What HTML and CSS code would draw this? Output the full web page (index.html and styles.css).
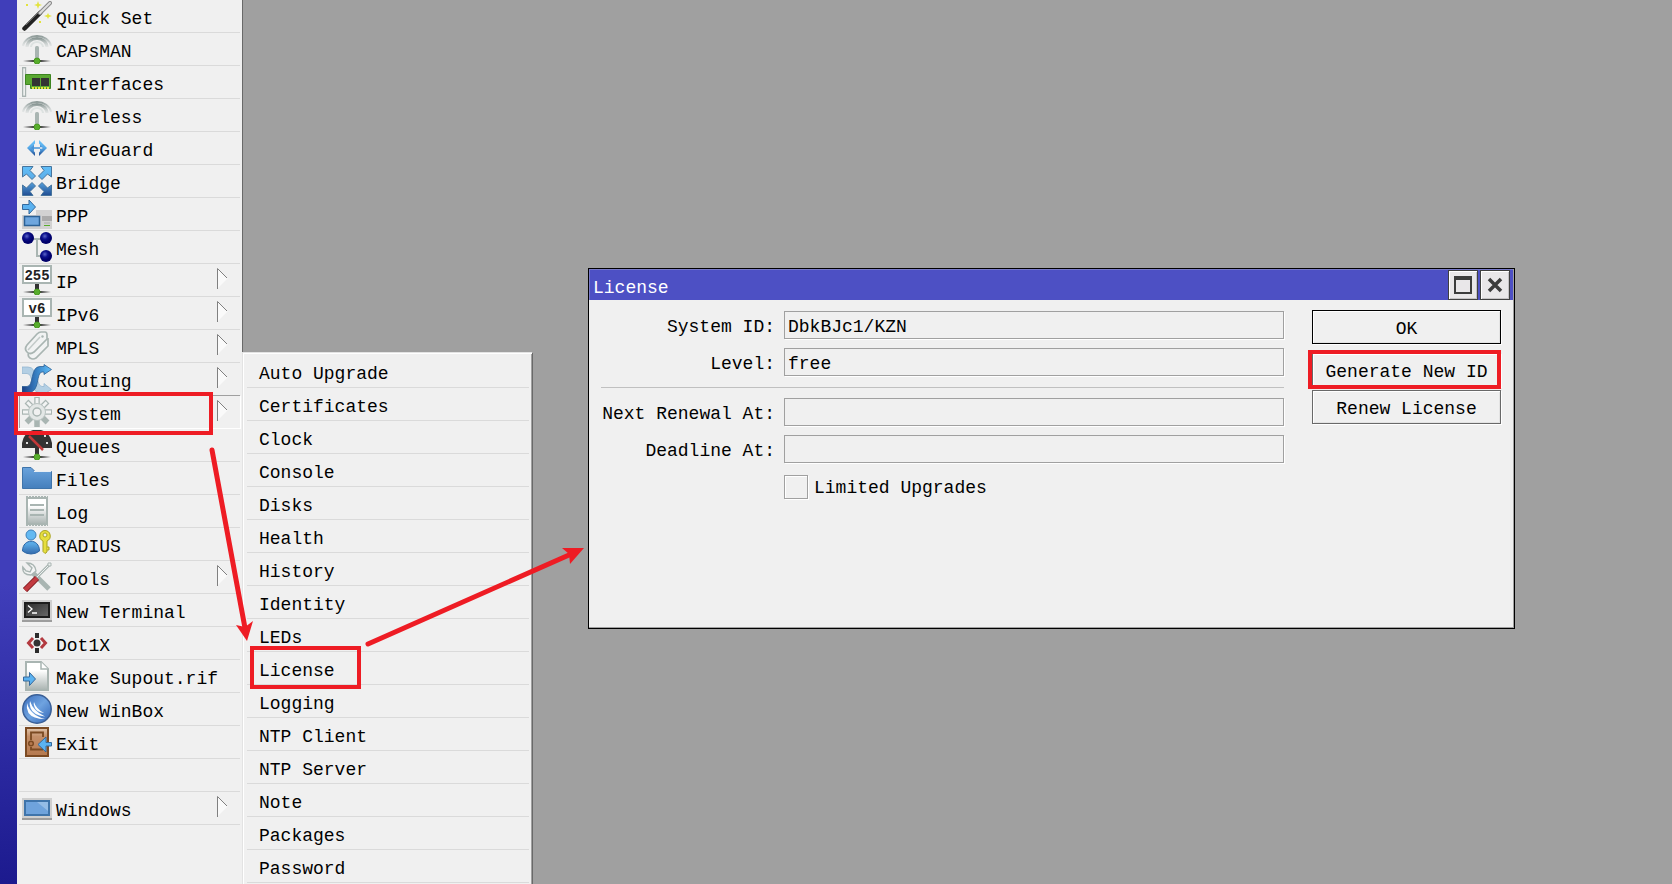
FILE: index.html
```html
<!DOCTYPE html>
<html lang="en">
<head>
<meta charset="utf-8">
<title>WinBox - License</title>
<link rel="stylesheet" href="styles.css">
</head>
<body>
<svg class="defs" aria-hidden="true">
  <defs>
    <linearGradient id="sky" x1="0" y1="0" x2="0" y2="30" gradientUnits="userSpaceOnUse"><stop offset="0" stop-color="#62c0fa"/><stop offset=".5" stop-color="#5aa9e4"/><stop offset="1" stop-color="#1f4a90"/></linearGradient>
    <linearGradient id="chevron" x1="0" y1="7" x2="0" y2="23" gradientUnits="userSpaceOnUse"><stop offset="0" stop-color="#6cc6fb"/><stop offset=".5" stop-color="#55a8e8"/><stop offset="1" stop-color="#1f4a90"/></linearGradient>
    <linearGradient id="route" x1="0" x2="1"><stop offset="0" stop-color="#1a3f84"/><stop offset=".6" stop-color="#3f8ed0"/><stop offset="1" stop-color="#62c0fa"/></linearGradient>
    <linearGradient id="base" x1="0" x2="1"><stop offset="0" stop-color="#333" stop-opacity="0"/><stop offset=".4" stop-color="#333"/><stop offset=".6" stop-color="#333"/><stop offset="1" stop-color="#333" stop-opacity="0"/></linearGradient>
    <linearGradient id="arc" x1="0" y1="0" x2="0" y2="1"><stop offset="0" stop-color="#8c9997"/><stop offset="1" stop-color="#c5cdcc" stop-opacity=".3"/></linearGradient>
    <linearGradient id="paper" x1="0" y1="0" x2="0" y2="1"><stop offset=".3" stop-color="#fff"/><stop offset="1" stop-color="#a9b3b1"/></linearGradient>
    <radialGradient id="ball" cx=".4" cy=".35"><stop offset="0" stop-color="#5c66c8"/><stop offset=".5" stop-color="#0c108c"/><stop offset="1" stop-color="#00006a"/></radialGradient>
    <linearGradient id="globe" x1="0" y1="0" x2="1" y2="1"><stop offset="0" stop-color="#3a6dbd"/><stop offset=".5" stop-color="#6fa3e0"/><stop offset="1" stop-color="#2f62b4"/></linearGradient>
    <linearGradient id="folder" x1="0" y1="0" x2="0" y2="1"><stop offset="0" stop-color="#6aa3dc"/><stop offset="1" stop-color="#457fbc"/></linearGradient>
    <linearGradient id="door" x1="0" y1="0" x2="0" y2="1"><stop offset="0" stop-color="#e0c4aa"/><stop offset=".3" stop-color="#c4906a"/><stop offset="1" stop-color="#b5794e"/></linearGradient>
    <linearGradient id="term" x1="0" y1="0" x2="1" y2="1"><stop offset="0" stop-color="#2c2c2c"/><stop offset="1" stop-color="#6a6a6a"/></linearGradient>
    <symbol id="node" viewBox="0 0 30 30"><rect x="1" y="26" width="28" height="2" fill="url(#base)"/><circle cx="15" cy="27" r="3" fill="#58ad2c" stroke="#4a9a22"/></symbol>
    <symbol id="antenna" viewBox="0 0 30 30">
      <path d="M1 12A14.200 12 0 0 1 29 12" fill="none" stroke="url(#arc)" stroke-width="2"/>
      <path d="M5 13A10 8.500 0 0 1 25 13" fill="none" stroke="url(#arc)" stroke-width="3"/>
      <path d="M9 13A6 5 0 0 1 21 13" fill="none" stroke="#dde2e1" stroke-width="2"/>
      <rect x="13" y="12" width="4" height="14" rx="1.500" fill="#a9b5b2"/>
      <use href="#node"/>
    </symbol>
    <symbol id="expand" viewBox="0 0 11 21"><path d="M.5 .5V20.500L10.500 10.500Z" fill="#fafafa"/><path d="M.5 21V.5L10 10" fill="none" stroke="#808080"/></symbol>
  </defs>
</svg>

<div class="app">
  <div class="brand-stripe"></div>
  <nav class="menu" aria-label="Main menu">
    <button class="item"><svg class="icon" viewBox="0 0 30 30"><path d="M2.500 27.500L18 12" stroke="#222" stroke-width="4.500" stroke-linecap="round"/><path d="M4 24L17 11" stroke="#666" stroke-width="1"/><path d="M18 12L28 2" stroke="#8a8a8a" stroke-width="4" stroke-linecap="round"/><path d="M18 12L28 2" stroke="#dedede" stroke-width="2" stroke-linecap="round"/><path d="M16 0l1 3 3 1-3 1-1 3-1-3-3-1 3-1zM26 12l1 2 3 1-3 1-1 2-1-2-3-1 3-1zM4 3h2v2H4zM17 20h2v2h-2z" fill="#e3e33c"/></svg><span>Quick Set</span></button>
    <button class="item"><svg class="icon"><use href="#antenna"/></svg><span>CAPsMAN</span></button>
    <button class="item"><svg class="icon" viewBox="0 0 30 30"><rect x=".7" y=".7" width="2.800" height="28.600" fill="#fff" stroke="#a9b3b1" stroke-width="1.400"/><path d="M3.500 7.500H28.500V21.500H8.500V17.500H3.500Z" fill="#5aa832" stroke="#3c8420"/><path d="M10 11h8v8h-8zM19 11h8v8h-8z" fill="#333"/><path d="M10 21H28" stroke="#e3e33c" stroke-width="2" stroke-dasharray="2 1"/></svg><span>Interfaces</span></button>
    <button class="item"><svg class="icon"><use href="#antenna"/></svg><span>Wireless</span></button>
    <button class="item"><svg class="icon" viewBox="0 0 30 30"><path d="M13 7V10.500L9 15 13 19.500V23L5 15ZM17 7V10.500L21 15 17 19.500V23L25 15Z" fill="url(#chevron)"/><path d="M9.500 14.200H20.500V15.800H9.500ZM12 11.500V18.500L8.500 15ZM18 11.500V18.500L21.500 15Z" fill="#4794d8"/></svg><span>WireGuard</span></button>
    <button class="item"><svg class="icon" viewBox="0 0 30 30"><path d="M.5 .5H11L8 4.500L13.500 10 10 13.500 4.500 8 .5 11ZM29.500 .5V11L25.500 8 20 13.500 16.500 10 22 4.500 19 .5ZM.5 29.500V19L4.500 22 10 16.500 13.500 20 8 25.500 11 29.500ZM29.500 29.500H19L22 25.500 16.500 20 20 16.500 25.500 22 29.500 19Z" fill="url(#sky)" stroke="#47749c"/></svg><span>Bridge</span></button>
    <button class="item"><svg class="icon" viewBox="0 0 30 30"><path d="M14 11H30V30H14Z" fill="#d2d2d2"/><path d="M20 17h10v5H20z" fill="#ababab"/><path d="M22 24h6" stroke="#aaa"/><path d="M22 26.500h6" stroke="#58ad2c"/><path d="M0 16h19v14H0z" fill="#cfcfcf"/><rect x="2.500" y="17.500" width="15" height="9" fill="#6ea6de" stroke="#2b6196" stroke-width="1.500"/><path d="M.5 5.500H7V1L13.500 8 7 15V10.500H.5Z" fill="#5bb2f0" stroke="#35699c"/></svg><span>PPP</span></button>
    <button class="item"><svg class="icon" viewBox="0 0 30 30"><path d="M6 7H24M15 7V24H24" fill="none" stroke="#a9b5b2" stroke-width="2"/><g fill="url(#ball)"><circle cx="6" cy="6" r="6"/><circle cx="24" cy="6" r="6"/><circle cx="24" cy="24" r="6"/></g></svg><span>Mesh</span></button>
    <button class="item"><svg class="icon" viewBox="0 0 30 30"><path d="M13 18h4v8h-4z" fill="#333"/><use href="#node"/><rect x="1" y="1" width="28" height="17" fill="#fff" stroke="#a9b5b2" stroke-width="2"/><text class="icon-text" x="15" y="15" text-anchor="middle">255</text></svg><span>IP</span><svg class="expand"><use href="#expand"/></svg></button>
    <button class="item"><svg class="icon" viewBox="0 0 30 30"><path d="M13 18h4v8h-4z" fill="#333"/><use href="#node"/><rect x="1" y="1" width="28" height="17" fill="#fff" stroke="#a9b5b2" stroke-width="2"/><text class="icon-text" x="15" y="15" text-anchor="middle">v6</text></svg><span>IPv6</span><svg class="expand"><use href="#expand"/></svg></button>
    <button class="item"><svg class="icon" viewBox="0 0 30 30"><g fill="#f1f3f3" stroke="#a9b5b2" stroke-width="1.700"><path d="M8 27Q5 25 7 21L18 9 26 8V15L14 27Q11 29 8 27Z"/><path d="M5 21Q2 18 5 14L15 3Q17 1 19 1H23Q25 1 25 4V8L12 21Q8 24 5 21Z"/></g><path d="M6 19L18 6" stroke="#c3cbc9" stroke-width="1.500"/><circle cx="20.500" cy="5.500" r="1.200" fill="#a9b5b2"/></svg><span>MPLS</span><svg class="expand"><use href="#expand"/></svg></button>
    <button class="item"><svg class="icon" viewBox="0 0 30 30"><path d="M0 3H6C16 3 14 22.500 20 22.500H22V19.500L29.500 25.500 22 30V28.500H17C8 28.500 12 9.500 5 9.500H0Z" fill="#b3cfe4" stroke="#94b6d0" stroke-width=".8"/><path d="M0 22.500H5C12 22.500 8 2.500 18 2.500H22V.5L29.500 5.500 22 10.500V8H20C14 8 18 28.500 7 28.500H0Z" fill="url(#route)" stroke="#2c5f96" stroke-width=".8"/></svg><span>Routing</span><svg class="expand"><use href="#expand"/></svg></button>
    <button class="item selected" aria-haspopup="true" aria-expanded="true"><svg class="icon" viewBox="0 0 30 30"><g fill="none" stroke="#a9b5b2" stroke-width="5.500"><path d="M15 0V30M0 15H30M4.500 4.500L25.500 25.500M4.500 25.500L25.500 4.500"/></g><g fill="none" stroke="#f3f4f4" stroke-width="3"><path d="M15 1V15M1 15H29M5.300 5.300L15 15 24.700 5.300"/></g><circle cx="15" cy="15" r="8.500" fill="#e3e7e6" stroke="#b9c3c1" stroke-width="1"/><circle cx="15" cy="15" r="4" fill="#f0f0f0" stroke="#a9b5b2" stroke-width="1.500"/></svg><span>System</span><svg class="expand"><use href="#expand"/></svg></button>
    <button class="item"><svg class="icon" viewBox="0 0 30 30"><path d="M13 18h4v8h-4z" fill="#333"/><use href="#node"/><path d="M0 18V13Q2 2 11 0H19Q28 2 30 13V18Z" fill="#333"/><path d="M7 6L21 20" stroke="#c23a3a" stroke-width="2.500"/><path d="M4 12h2v2H4zM22 5h2v2h-2zM24 12h2v2h-2z" fill="#ddd"/></svg><span>Queues</span></button>
    <button class="item"><svg class="icon" viewBox="0 0 30 30"><path d="M.5 4.500H9L13 8.500H29.500V25.500H.5Z" fill="url(#folder)" stroke="#3f74aa"/><path d="M12 8.500H29" stroke="#e8eef4"/></svg><span>Files</span></button>
    <button class="item"><svg class="icon" viewBox="0 0 30 30"><path d="M4 1H26M4 29H26" stroke="#a9b5b2" stroke-width="2" stroke-dasharray="2 1"/><rect x="5" y="2" width="20" height="26" fill="url(#paper)" stroke="#a9b5b2" stroke-width="2"/><path d="M8 9H22M8 14H22M8 19H22" stroke="#a9b5b2" stroke-width="2"/></svg><span>Log</span></button>
    <button class="item"><svg class="icon" viewBox="0 0 30 30"><circle cx="9" cy="6" r="5" fill="#63b9f2" stroke="#3f80ba"/><path d="M.5 22C.5 9 17.500 9 17.500 22Q14 25 9 25T.5 22Z" fill="url(#sky)" stroke="#2f68a6"/><path fill-rule="evenodd" d="M23 1.500A5.500 5.500 0 0 1 25 12V23L23 24.500 21 22.500V12A5.500 5.500 0 0 1 23 1.500ZM23 4A2 2 0 1 0 23 8 2 2 0 0 0 23 4Z" fill="#e6de3e" stroke="#a9a321"/><path d="M25 18h2v3h-2" fill="#e6de3e" stroke="#a9a321"/></svg><span>RADIUS</span></button>
    <button class="item"><svg class="icon" viewBox="0 0 30 30"><path d="M9 9L27 27" stroke="#a9b5b2" stroke-width="5"/><path d="M5 1L10 6 8 10 4 9 0.800 5Q0 13 9 13L14 9Q13 1 5 1Z" fill="#f4f5f5" stroke="#a9b5b2" stroke-width="1.400"/><path d="M28 2L14 16" stroke="#a9b5b2" stroke-width="3"/><path d="M28 2L14 16" stroke="#eef0f0"/><path d="M26 1h3v3h-3z" fill="#eef0f0" stroke="#a9b5b2"/><path d="M15 16L3 28" stroke="#811f24" stroke-width="6"/><path d="M15 16L3 28" stroke="#c23a40" stroke-width="4"/></svg><span>Tools</span><svg class="expand"><use href="#expand"/></svg></button>
    <button class="item"><svg class="icon" viewBox="0 0 30 30"><path d="M0 5h30v20H0z" fill="#cfcfcf"/><path d="M0 25h30v2H0z" fill="#9d9d9d"/><rect x="3" y="8" width="24" height="14" fill="url(#term)" stroke="#1d1d1d" stroke-width="2"/><path d="M6 10.500L10 14 6 17.500M10 18H15" fill="none" stroke="#fff" stroke-width="1.300"/></svg><span>New Terminal</span></button>
    <button class="item"><svg class="icon" viewBox="0 0 30 30"><path d="M11 10L6.500 15 11 20M19 10L23.500 15 19 20" fill="none" stroke="#b33a40" stroke-width="3"/><path d="M13 5h4v5h-4zM13 20h4v5h-4z" fill="#2b2b2b"/><circle cx="15" cy="15" r="3.500" fill="#333"/></svg><span>Dot1X</span></button>
    <button class="item"><svg class="icon" viewBox="0 0 30 30"><path d="M4 1H19L26 8V29H4Z" fill="url(#paper)" stroke="#a9b5b2" stroke-width="2"/><path d="M19 1V8H26" fill="#fff" stroke="#a9b5b2" stroke-width="1.500"/><path d="M1.500 16H7.500V11.500L13.500 18 7.500 24.500V20H1.500Z" fill="#5bb2f0" stroke="#35699c"/></svg><span>Make Supout.rif</span></button>
    <button class="item"><svg class="icon" viewBox="0 0 30 30"><circle cx="15" cy="15" r="14.200" fill="url(#globe)" stroke="#3a5f96" stroke-width="1.500"/><path d="M5 9Q8 21 23 25Q11 25 6.500 19Q4 14 5 9ZM8 7Q11 17 23 22.500Q11 21 8.500 14Q7 10 8 7ZM12 8Q14 15 22 19Q14 18 12.500 13Q11 10 12 8Z" fill="#fff"/></svg><span>New WinBox</span></button>
    <button class="item"><svg class="icon" viewBox="0 0 30 30"><rect x="4" y="1" width="22" height="28" fill="url(#door)" stroke="#7b4a22" stroke-width="2"/><path d="M9 13V5.500H21V10M9 20V22.500H21" fill="none" stroke="#7b4a22" stroke-width="1.800"/><circle cx="9" cy="16.500" r="2.300" fill="#b5794e" stroke="#7b4a22" stroke-width="1.500"/><path d="M29.500 15.500H24V10L16 17.500 24 25V19H29.500Z" fill="#5bb2f0" stroke="#35699c"/></svg><span>Exit</span></button>
    <div class="item blank"></div>
    <button class="item"><svg class="icon" viewBox="0 0 30 30"><path d="M0 5h30v20H0z" fill="#cfcfcf"/><path d="M0 25h30v2H0z" fill="#9d9d9d"/><rect x="3" y="8" width="24" height="14" fill="#6fa3dc" stroke="#3f74aa" stroke-width="2"/><path d="M15 9h11v9z" fill="#94bce6"/></svg><span>Windows</span><svg class="expand"><use href="#expand"/></svg></button>
  </nav>

  <nav class="submenu" aria-label="System">
    <button class="item">Auto Upgrade</button>
    <button class="item">Certificates</button>
    <button class="item">Clock</button>
    <button class="item">Console</button>
    <button class="item">Disks</button>
    <button class="item">Health</button>
    <button class="item">History</button>
    <button class="item">Identity</button>
    <button class="item">LEDs</button>
    <button class="item">License</button>
    <button class="item">Logging</button>
    <button class="item">NTP Client</button>
    <button class="item">NTP Server</button>
    <button class="item">Note</button>
    <button class="item">Packages</button>
    <button class="item">Password</button>
  </nav>

  <section class="window" aria-labelledby="window-title">
    <header class="titlebar">
      <h1 id="window-title">License</h1>
      <button class="title-button" aria-label="Maximize"><svg viewBox="0 0 18 18"><path d="M0 0H18V18H0ZM2 4V16H16V4Z" fill="#3c3c3c" fill-rule="evenodd"/></svg></button>
      <button class="title-button" aria-label="Close"><svg viewBox="0 0 18 18"><path d="M3 3L15 15M15 3L3 15" stroke="#3c3c3c" stroke-width="3.500"/></svg></button>
    </header>
    <form class="window-body">
      <div class="fields">
        <div class="field"><label for="system-id">System ID:</label><input id="system-id" type="text" value="DbkBJc1/KZN" readonly></div>
        <div class="field"><label for="level">Level:</label><input id="level" type="text" value="free" readonly></div>
        <hr>
        <div class="field"><label for="renewal">Next Renewal At:</label><input id="renewal" type="text" readonly></div>
        <div class="field"><label for="deadline">Deadline At:</label><input id="deadline" type="text" readonly></div>
        <div class="check"><input id="limited" type="checkbox"><label for="limited">Limited Upgrades</label></div>
      </div>
      <div class="actions">
        <button class="primary" type="button">OK</button>
        <button type="button">Generate New ID</button>
        <button type="button">Renew License</button>
      </div>
    </form>
  </section>

  <svg class="annotations" aria-hidden="true">
    <g fill="none" stroke="#ee1c24" stroke-width="4">
      <rect x="16" y="394" width="195" height="39"/>
      <rect x="252" y="648" width="107" height="39"/>
      <rect x="1310" y="352" width="189" height="35"/>
    </g>
    <g fill="none" stroke="#ee1c24" stroke-width="5" stroke-linecap="round"><path d="M212 450L245 628M368 644L569 555"/></g>
    <path d="M247 641L236 625 245 627 253 621ZM584 548L562 548 569 554 570 564Z" fill="#ee1c24"/>
  </svg>
</div>
</body>
</html>
```

FILE: styles.css
```css
* {
  box-sizing: border-box;
}

body {
  margin: 0;
  background: #a0a0a0;
  overflow: hidden;
}

body,
button,
input {
  font-family: "Liberation Mono", monospace;
  font-size: 18px;
  line-height: 22px;
  color: #000;
}

button {
  margin: 0;
  padding: 0;
  border: 0;
  background: none;
}

.defs {
  position: absolute;
  width: 0;
  height: 0;
}

.app {
  position: relative;
  display: flex;
  height: 100vh;
  overflow: hidden;
}

.brand-stripe {
  flex: 0 0 17px;
  background: linear-gradient(#403eba 0, #403eba 66%, #1c1a8e 100%);
}

.menu {
  flex: 0 0 226px;
  display: flex;
  flex-direction: column;
  padding: 0 2px;
  background: #f0f0f0;
  border-right: 1px solid #696969;
}

.item {
  flex: 0 0 33px;
  display: flex;
  align-items: center;
  gap: 4px;
  padding: 0 12px 0 3px;
  border-bottom: 1px solid #dadada;
  text-align: left;
  white-space: nowrap;
}

.item span {
  padding-top: 5px;
}

.item.selected {
  border-bottom-color: #fff;
  box-shadow: 0 -1px #a0a0a0, 1px 0 #fff, inset 1px 0 #a0a0a0;
}

.icon {
  flex: none;
  width: 30px;
  height: 30px;
}

.icon-text {
  font: bold 14px "Liberation Mono", monospace;
  fill: #222;
}

.expand {
  flex: none;
  align-self: flex-start;
  width: 11px;
  height: 21px;
  margin: 4px 0 0 auto;
}

.submenu {
  position: absolute;
  left: 242px;
  top: 352px;
  bottom: 0;
  width: 291px;
  display: flex;
  flex-direction: column;
  padding: 2px 3px 0 4px;
  overflow: hidden;
  background: #f0f0f0;
  border: solid #e3e3e3;
  border-width: 1px 0 0 1px;
  border-right: 1px solid #696969;
  box-shadow: inset 1px 1px #fff, inset -1px 0 #a0a0a0;
}

.submenu .item {
  padding: 5px 0 0 12px;
}

.window {
  position: absolute;
  left: 588px;
  top: 268px;
  width: 927px;
  min-height: 361px;
  background: #f0f0f0;
  border: 1px solid #000;
  box-shadow: inset -1px -1px #a0a0a0;
}

.titlebar {
  display: flex;
  gap: 2px;
  padding: 1px 3px 0 4px;
  margin-right: 1px;
  background: #4d50c4;
  box-shadow: inset 1px 1px #7678c8;
}

.titlebar h1 {
  flex: 1;
  margin: 0;
  padding-top: 7px;
  font-size: 18px;
  font-weight: 400;
  line-height: 22px;
  color: #fff;
}

.title-button {
  display: grid;
  place-items: center;
  width: 30px;
  height: 30px;
  background: #e9e7e9;
  border: 1px solid #404040;
  box-shadow: inset 1px 1px #fff, inset -1px -1px #c4c2c4;
}

.title-button svg {
  width: 18px;
  height: 18px;
}

.window-body {
  display: flex;
  gap: 28px;
  padding: 10px 13px 10px 12px;
}

.fields {
  flex: 1;
  display: flex;
  flex-direction: column;
  gap: 9px;
  padding-top: 1px;
}

.field,
.check {
  display: grid;
  grid-template-columns: 174px 1fr;
  column-gap: 9px;
  align-items: center;
}

.field label {
  padding-top: 3px;
  text-align: right;
  white-space: nowrap;
}

.field input {
  width: 100%;
  height: 28px;
  padding: 3px 3px 0;
  background: #f0f0f0;
  border: 1px solid #a0a0a0;
  border-radius: 0;
  box-shadow: 1px 1px #fff;
  outline: none;
}

.fields hr {
  width: 100%;
  height: 1px;
  margin: 2px 0 1px;
  border: 0;
  background: #c0c0c0;
}

.check {
  grid-template-columns: 24px 1fr;
  column-gap: 6px;
  margin-top: 2px;
  padding-left: 183px;
}

.check input {
  appearance: none;
  width: 24px;
  height: 24px;
  margin: 0;
  border: 1px solid #a0a0a0;
  box-shadow: 1px 1px #fff, inset 1px 1px #fff;
}

.check label {
  padding-top: 3px;
}

.actions {
  flex: 0 0 189px;
  display: flex;
  flex-direction: column;
  gap: 3px;
}

.actions button {
  height: 34px;
  padding-top: 3px;
  border: 1px solid #696969;
  box-shadow: 1px 1px #fff, inset 1px 1px #fff, inset -1px -1px #e3e3e3;
}

.actions .primary {
  margin-bottom: 6px;
  border-color: #000;
}

.annotations {
  position: absolute;
  inset: 0;
  width: 100%;
  height: 100%;
  pointer-events: none;
}
```
